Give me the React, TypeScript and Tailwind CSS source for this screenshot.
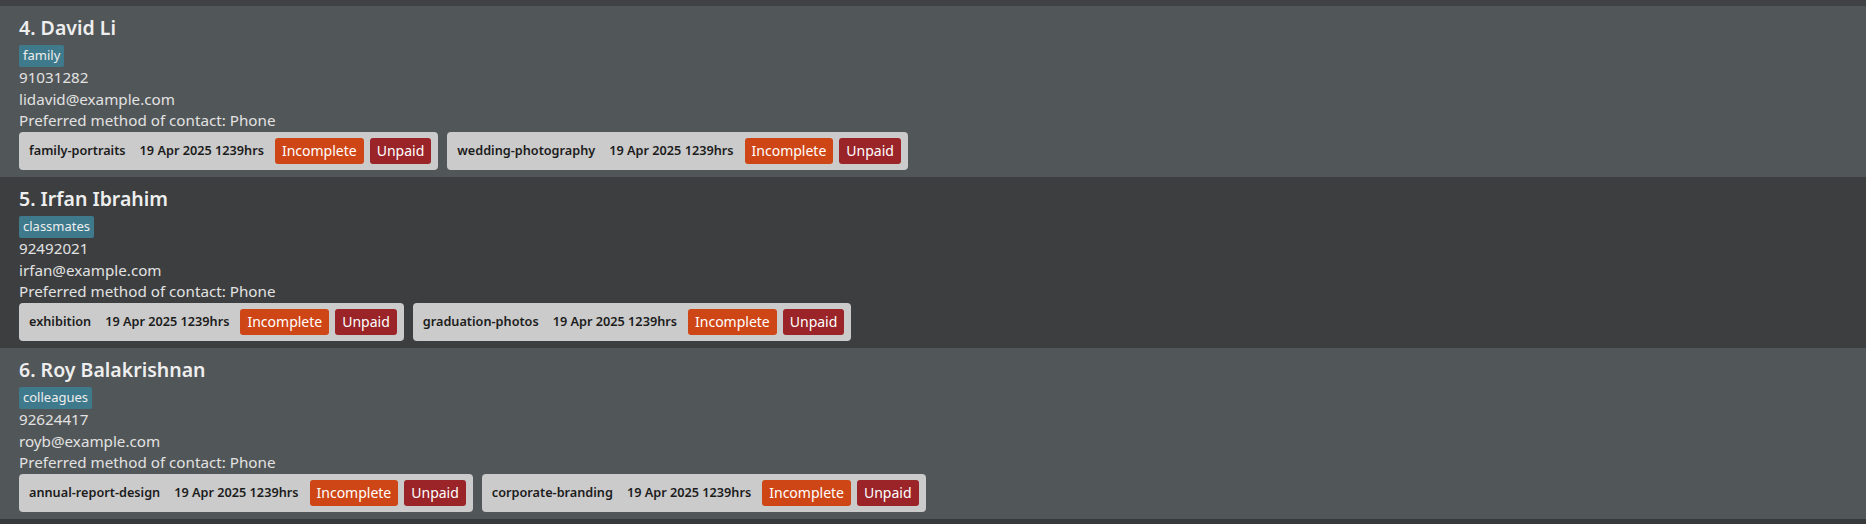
type Task = { name: string; date: string };
type Person = {
  idx: number;
  name: string;
  tag: string;
  phone: string;
  email: string;
  tasks: Task[];
};

const people: Person[] = [
  {
    idx: 4,
    name: "David Li",
    tag: "family",
    phone: "91031282",
    email: "lidavid@example.com",
    tasks: [
      { name: "family-portraits", date: "19 Apr 2025 1239hrs" },
      { name: "wedding-photography", date: "19 Apr 2025 1239hrs" },
    ],
  },
  {
    idx: 5,
    name: "Irfan Ibrahim",
    tag: "classmates",
    phone: "92492021",
    email: "irfan@example.com",
    tasks: [
      { name: "exhibition", date: "19 Apr 2025 1239hrs" },
      { name: "graduation-photos", date: "19 Apr 2025 1239hrs" },
    ],
  },
  {
    idx: 6,
    name: "Roy Balakrishnan",
    tag: "colleagues",
    phone: "92624417",
    email: "royb@example.com",
    tasks: [
      { name: "annual-report-design", date: "19 Apr 2025 1239hrs" },
      { name: "corporate-branding", date: "19 Apr 2025 1239hrs" },
    ],
  },
];

function TaskChip({ task }: { task: Task }) {
  return (
    <div className="flex h-[38px] items-center rounded-[4px] bg-[#cbcbcb] pl-[10px] pr-[7px]">
      <span className="text-[12.7px] font-semibold text-[#1c1c1c]">{task.name}</span>
      <span className="ml-[14px] text-[12.7px] font-semibold text-[#1c1c1c]">{task.date}</span>
      <span className="ml-[11px] flex h-[26px] items-center rounded-[3px] bg-[#cf4616] px-[7px] text-[14px] text-white">
        Incomplete
      </span>
      <span className="ml-[6px] flex h-[26px] items-center rounded-[3px] bg-[#9a2428] px-[7px] text-[14px] text-white">
        Unpaid
      </span>
    </div>
  );
}

function PersonCard({ p, light }: { p: Person; light: boolean }) {
  return (
    <div className={light ? "h-[171px] bg-[#515658] px-[19px] pt-[7px]" : "h-[171px] bg-[#3c3e40] px-[19px] pt-[7px]"}>
      <div className="h-[30px] text-[19.5px] font-semibold leading-[30px] text-[#eeeeee]">
        {p.idx}. {p.name}
      </div>
      <div className="mt-[2px] flex">
        <span className="flex h-[22px] items-center rounded-[2px] bg-[#3e7a8c] px-[4px] text-[13px] text-[#eeeeee]">
          {p.tag}
        </span>
      </div>
      <div className="text-[15.2px] leading-[21.5px] text-[#e2e2e2]">
        <div>{p.phone}</div>
        <div>{p.email}</div>
        <div>Preferred method of contact: Phone</div>
      </div>
      <div className="flex gap-[9px]">
        {p.tasks.map((t) => (
          <TaskChip key={t.name} task={t} />
        ))}
      </div>
    </div>
  );
}

export default function App() {
  return (
    <div className="h-[524px] w-[1866px] overflow-hidden bg-[#38393a] font-['Noto_Sans',sans-serif]">
      <div className="h-[6px] bg-[#404143]"></div>
      {people.map((p, i) => (
        <PersonCard key={p.idx} p={p} light={i % 2 === 0} />
      ))}
    </div>
  );
}
